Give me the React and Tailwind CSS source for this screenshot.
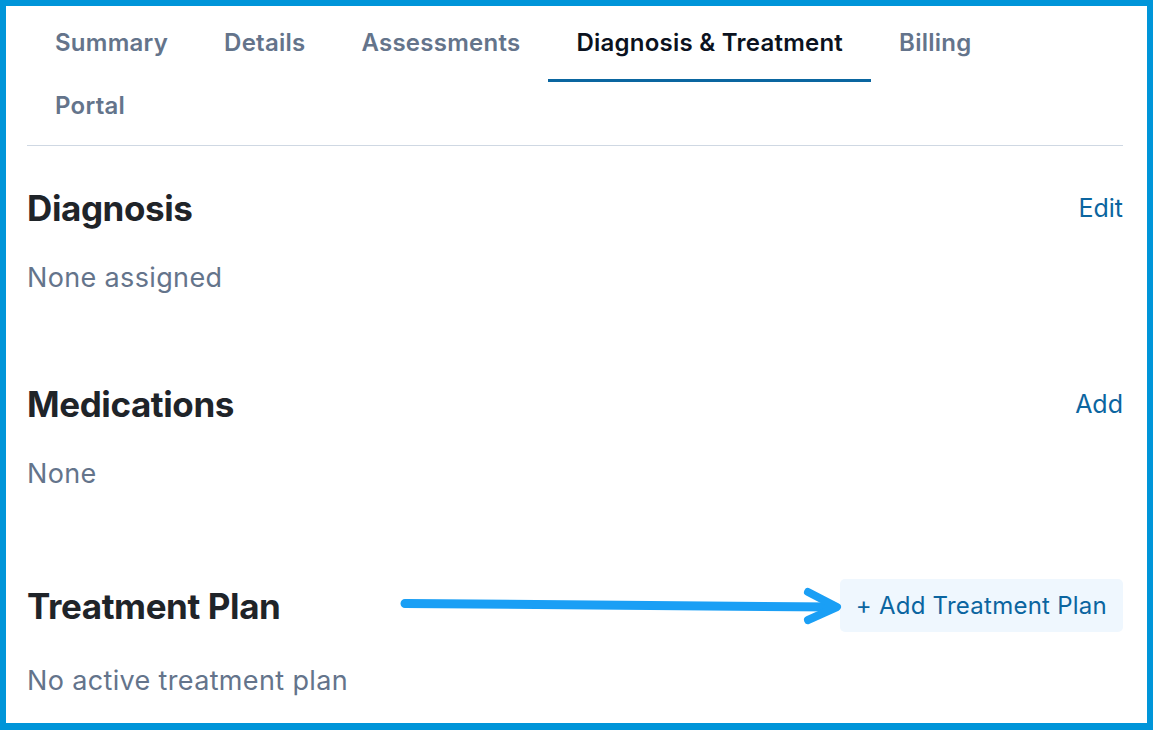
import React from "react";

const tabs = ["Summary", "Details", "Assessments", "Diagnosis & Treatment", "Billing", "Portal"];

function Section({ title, action, text, button }) {
  return (
    <div className="flex flex-col">
      <div className="flex items-center justify-between">
        <h2 className="text-[35px] leading-[40px] font-bold tracking-[-0.4px] text-[#1f2429]">{title}</h2>
        {button ? (
          <button className="h-[53px] rounded-[5px] bg-[#eff7fe] px-[16px] text-[24px] leading-[36px] tracking-[0.25px] text-[#0b65a0]">
            + Add Treatment Plan
          </button>
        ) : (
          <button className="text-[25px] leading-[39px] text-[#0b65a0]">{action}</button>
        )}
      </div>
      <p className={`${button ? "mt-[29px]" : "mt-[30px]"} text-[27px] leading-[39px] tracking-[0.35px] text-[#64748b]`}>{text}</p>
    </div>
  );
}

export default function App() {
  return (
    <div
      className="relative h-[730px] w-full overflow-hidden border-[#0095d9] border-t-[6px] border-l-[6px] border-r-[6px] border-b-[7px] bg-white pl-[21px] pr-[24px] pt-[13px]"
      style={{ fontFamily: "Inter, 'Noto Sans', sans-serif" }}
    >
      <div className="border-b border-[#cfd8e3]">
        <div className="flex flex-wrap pr-3">
          {tabs.map((t) => {
            const active = t === "Diagnosis & Treatment";
            return (
              <div
                key={t}
                className={`px-[28px] pt-2 pb-5 border-b-[3px] text-[24px] leading-[32px] font-semibold tracking-[0.25px] ${
                  active ? "border-[#0a66a0] text-[#0b1220]" : "border-transparent text-[#64748b]"
                }`}
              >
                {t}
              </div>
            );
          })}
        </div>
      </div>
      <div className="mt-[42px] flex flex-col gap-[87px]">
        <Section title="Diagnosis" action="Edit" text="None assigned" />
        <Section title="Medications" action="Add" text="None" />
      </div>
      <div className="mt-[86px]">
        <Section title="Treatment Plan" text="No active treatment plan" button />
      </div>
      <svg
        className="pointer-events-none absolute left-0 top-0"
        width="1153"
        height="730"
        viewBox="0 0 1153 730"
        style={{ transform: "translate(-6px,-6px)" }}
      >
        <path d="M405 603.5 L834 607" stroke="#1a9ff5" strokeWidth="9" strokeLinecap="round" fill="none" />
        <path d="M808 592 L837 607 L808 620" stroke="#1a9ff5" strokeWidth="8" strokeLinecap="round" strokeLinejoin="round" fill="none" />
      </svg>
    </div>
  );
}
